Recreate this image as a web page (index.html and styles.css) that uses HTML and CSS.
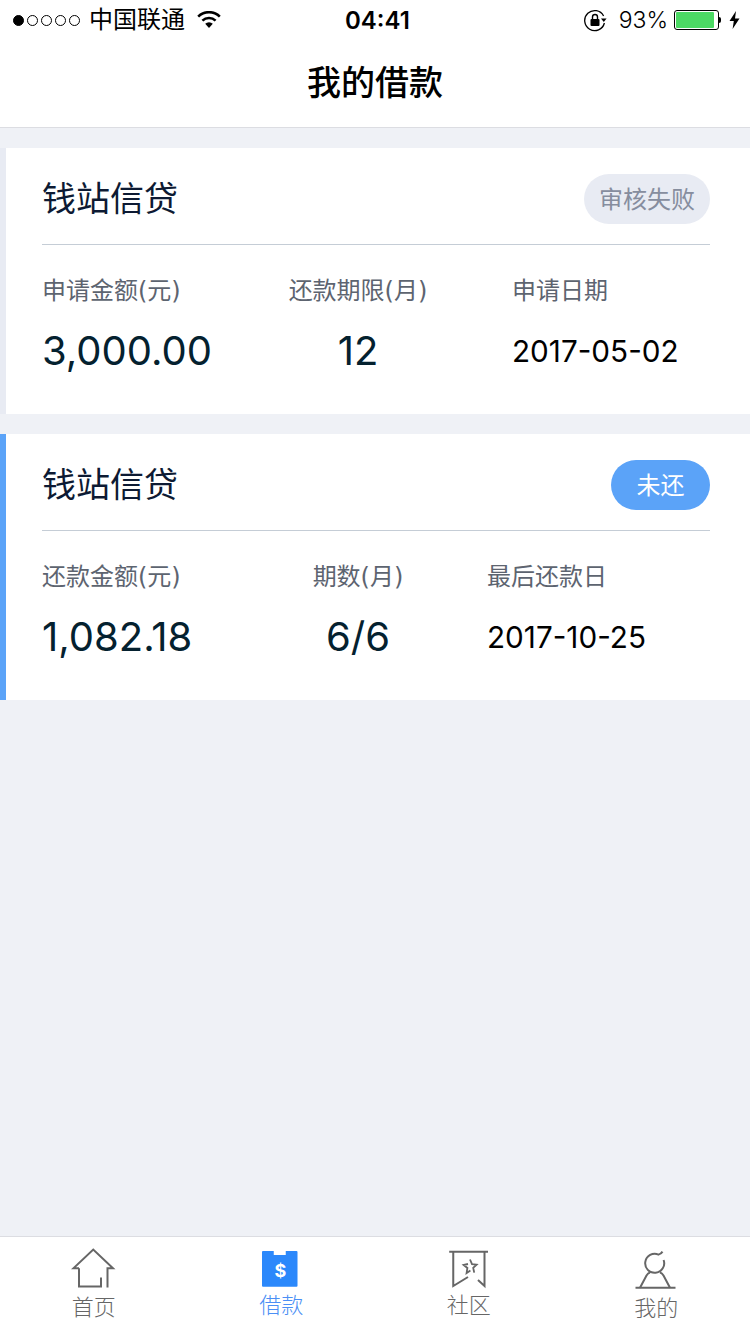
FILE: index.html
```html
<!DOCTYPE html>
<html lang="zh-CN">
<head>
  <meta charset="UTF-8">
  <title>我的借款</title>
  <link rel="stylesheet" href="styles.css">
</head>
<body>
  <!-- Status bar -->
  <div class="status">
    <div class="status-side">
      <span class="signal"><i class="on"></i><i></i><i></i><i></i><i></i></span>
      <span class="carrier">中国联通</span>
      <svg class="wifi" width="24" height="18" viewBox="0 0 24 18">
        <path d="M12 17 L8.2 12.8 A5.4 5.4 0 0 1 15.8 12.8Z" fill="#000"/>
        <path d="M5.4 9.6 A9.6 9.6 0 0 1 18.6 9.6" fill="none" stroke="#000" stroke-width="2.6"/>
        <path d="M1.2 5.6 A15.4 15.4 0 0 1 22.8 5.6" fill="none" stroke="#000" stroke-width="2.6"/>
      </svg>
    </div>
    <span class="time">04:41</span>
    <div class="status-side status-right">
      <svg width="24" height="24" viewBox="0 0 24 24">
        <path d="M20.6 8 A10 10 0 1 0 21.4 15" fill="none" stroke="#000" stroke-width="1.3"/>
        <path d="M18 10.5 L23.6 10.5 L20.8 14Z" fill="#000"/>
        <rect x="7.5" y="11" width="9" height="7" rx="1" fill="#000"/>
        <path d="M9.5 11 V9 A2.5 2.5 0 0 1 14.5 9 V11" fill="none" stroke="#000" stroke-width="1.4"/>
      </svg>
      <span class="percent">93%</span>
      <span class="battery"><span class="battery-fill"></span></span>
      <span class="battery-tip"></span>
      <svg class="bolt" width="11" height="18" viewBox="0 0 11 18">
        <path d="M7 0 L0.5 10 H4.8 L3.6 18 L10.5 7.4 H6Z" fill="#000"/>
      </svg>
    </div>
  </div>

  <!-- Nav -->
  <header class="nav">
    <h1>我的借款</h1>
  </header>

  <main>
    <section class="card card-failed">
      <div class="card-head">
        <h2>钱站信贷</h2>
        <span class="badge badge-grey">审核失败</span>
      </div>
      <div class="stats">
        <div class="col col-first">
          <p class="label">申请金额(元)</p>
          <p class="amount">3,000.00</p>
        </div>
        <div class="col col-mid">
          <p class="label">还款期限(月)</p>
          <p class="amount">12</p>
        </div>
        <div class="col col-last">
          <p class="label">申请日期</p>
          <p class="date">2017-05-02</p>
        </div>
      </div>
    </section>

    <section class="card card-active">
      <div class="card-head">
        <h2>钱站信贷</h2>
        <span class="badge badge-blue">未还</span>
      </div>
      <div class="stats">
        <div class="col col-first">
          <p class="label">还款金额(元)</p>
          <p class="amount">1,082.18</p>
        </div>
        <div class="col col-mid">
          <p class="label">期数(月)</p>
          <p class="amount">6/6</p>
        </div>
        <div class="col col-last">
          <p class="label">最后还款日</p>
          <p class="date">2017-10-25</p>
        </div>
      </div>
    </section>
  </main>

  <!-- Tab bar -->
  <nav class="tabs">
    <a class="tab">
      <svg width="46" height="47" viewBox="0 0 46 47" fill="none" stroke="#666" stroke-width="2">
        <path d="M8 20.3 H2.4 L22.25 1.6 L42 20.3 H36.5 V39.5"/>
        <path d="M8 20.3 V38.5 H30 V29.5"/>
      </svg>
      <span>首页</span>
    </a>
    <a class="tab tab-on">
      <svg width="46" height="45" viewBox="0 0 46 45">
        <path d="M5 3 H15.75 V7 H27.75 V3 H38.5 A1 1 0 0 1 39.5 4 V37.7 A1 1 0 0 1 38.5 38.7 H5 A1 1 0 0 1 4 37.7 V4 A1 1 0 0 1 5 3Z" fill="#2b88fb"/>
        <text x="22.4" y="29" text-anchor="middle" class="dollar">$</text>
      </svg>
      <span>借款</span>
    </a>
    <a class="tab">
      <svg width="46" height="45" viewBox="0 0 46 45" fill="none" stroke="#666" stroke-width="2">
        <path d="M3.2 3.7 H42"/>
        <path d="M7.25 3.7 V38 L22 29"/>
        <path d="M38.5 3.7 V38 L32 32"/>
        <path d="M24 11.5 L26 16.2 L30.6 16.6 L27.2 19.8 L28.2 24.6 M24.4 22.4 L20.6 25 L21.4 20 L17.6 17 L22 16" stroke-width="1.8"/>
      </svg>
      <span>社区</span>
    </a>
    <a class="tab">
      <svg width="46" height="48" viewBox="0 0 46 48" fill="none" stroke="#666" stroke-width="2">
        <path d="M29.5 3.6 Q28 6 25.5 6.6 A9.5 9.5 0 1 0 30.6 12"/>
        <path d="M2.5 39.7 H42.5"/>
        <path d="M7 39.7 L13.5 27.5 Q15 25 17 24.5"/>
        <path d="M37 39.7 L30.5 27.5 Q29 25 27 24.5"/>
      </svg>
      <span>我的</span>
    </a>
  </nav>
</body>
</html>
```

FILE: styles.css
```css
html, body {
  height: 100%;
  margin: 0;
  padding: 0;
}

body {
  display: flex;
  flex-direction: column;
  background: #eff1f6;
  font-family: Inter, "Noto Sans CJK SC", sans-serif;
  overflow: hidden;
}

p, h1, h2 {
  margin: 0;
  font-weight: 400;
}

/* status bar */
.status {
  display: flex;
  align-items: center;
  justify-content: space-between;
  position: relative;
  height: 40px;
  padding: 0 10px 0 13px;
  background: #fff;
  color: #000;
}

.status-side {
  display: flex;
  align-items: center;
}

.signal {
  display: flex;
  gap: 3px;
}

.signal i {
  width: 9px;
  height: 9px;
  border: 1px solid #000;
  border-radius: 50%;
}

.signal i.on {
  background: #000;
}

.carrier {
  margin-left: 9px;
  font-size: 24px;
  line-height: 40px;
}

.wifi {
  margin-left: 12px;
}

.time {
  position: absolute;
  left: 345px;
  font-size: 24px;
  font-weight: 600;
}

.percent {
  margin-left: 12px;
  font-size: 23px;
  font-weight: 300;
}

.battery {
  display: block;
  box-sizing: content-box;
  width: 41px;
  height: 16px;
  margin-left: 6px;
  padding: 1px;
  border: 1px solid #000;
  border-radius: 3px;
}

.battery-fill {
  display: block;
  width: 38px;
  height: 16px;
  background: #4cd964;
  border-radius: 1px;
}

.battery-tip {
  width: 2px;
  height: 6px;
  background: #000;
  border-radius: 0 2px 2px 0;
}

.bolt {
  margin-left: 8px;
}

/* nav */
.nav {
  height: 87px;
  background: #fff;
  border-bottom: 1px solid #dcdde2;
}

.nav h1 {
  font-size: 34px;
  font-weight: 500;
  line-height: 86px;
  text-align: center;
  color: #000;
}

/* cards */
main {
  flex: 1;
  padding-top: 20px;
}

.card {
  height: 266px;
  margin-bottom: 20px;
  padding: 0 40px 0 36px;
  box-sizing: border-box;
  background: #fff;
}

.card-failed {
  border-left: 6px solid #e8ebf3;
}

.card-active {
  border-left: 6px solid #5ba3f8;
}

.card-head {
  display: flex;
  align-items: center;
  justify-content: space-between;
  height: 96px;
  border-bottom: 1px solid #c5cdd6;
}

.card-head h2 {
  font-size: 34px;
  color: #0d1a33;
}

.badge {
  height: 50px;
  margin-top: 6px;
  padding: 0 15px;
  border-radius: 25px;
  font-size: 24px;
  line-height: 51px;
}

.badge-grey {
  background: #e8ebf3;
  color: #868d9e;
}

.badge-blue {
  padding: 0 25.5px;
  background: #5ba3f8;
  color: #fff;
}

.stats {
  display: flex;
  padding-top: 29px;
}

.col-first {
  width: 200px;
}

.col-mid {
  width: 232px;
  text-align: center;
}

.card-failed .col-last {
  margin-left: 38px;
}

.card-active .col-last {
  margin-left: 13px;
}

.label {
  font-family: "DejaVu Sans", "Noto Sans CJK SC", sans-serif;
  font-size: 24px;
  line-height: 34px;
  color: #5d6470;
  white-space: nowrap;
}

.amount {
  margin-top: 17px;
  font-size: 40px;
  line-height: 52px;
  color: #04212f;
}

.date {
  margin-top: 17px;
  font-size: 29.7px;
  line-height: 52px;
  color: #000;
}

/* tab bar */
.tabs {
  display: flex;
  height: 97px;
  background: #fff;
  border-top: 1px solid #dcdde2;
}

.tab {
  flex: 1;
  display: flex;
  flex-direction: column;
  align-items: center;
  padding-top: 11px;
  font-size: 22px;
  font-weight: 300;
  line-height: 24px;
  color: #666;
}

.tab-on {
  color: #4b8ff5;
}

.dollar {
  font-size: 18px;
  font-weight: 700;
  fill: #fff;
}
```
